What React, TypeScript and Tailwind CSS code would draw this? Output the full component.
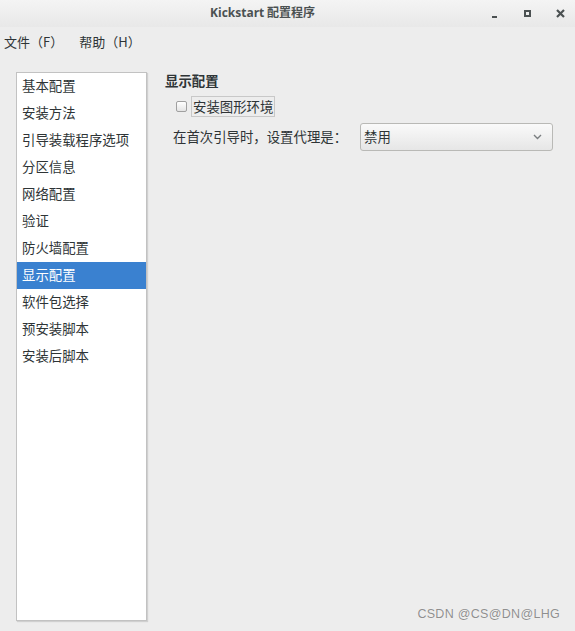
import React from "react";

const items = [
  "基本配置",
  "安装方法",
  "引导装载程序选项",
  "分区信息",
  "网络配置",
  "验证",
  "防火墙配置",
  "显示配置",
  "软件包选择",
  "预安装脚本",
  "安装后脚本",
];

const font = { fontFamily: '"Noto Sans CJK SC", "Noto Sans", sans-serif' };

export default function App() {
  return (
    <div
      className="w-[575px] h-[631px] bg-[#ededed] text-[#2e3436] flex flex-col overflow-hidden relative"
      style={font}
    >
      {/* Title bar */}
      <div className="h-[27px] flex items-center bg-gradient-to-b from-[#f4f4f4] to-[#e8e8e8] shrink-0">
        <div className="pl-[210px] pb-[2px] text-[12px] font-bold text-[#4b5152] leading-none">
          <span style={{ fontFamily: '"Open Sans", "Noto Sans", sans-serif' }}>Kickstart</span> 配置程序
        </div>
        <div className="ml-auto flex items-center -mr-[2px]">
          <div className="w-[33px] h-[27px] flex items-center justify-center">
            <div className="w-[5px] h-[2px] bg-[#4b5152] mt-[6px]" />
          </div>
          <div className="w-[33px] h-[27px] flex items-center justify-center">
            <div className="w-[7px] h-[7px] border-2 border-[#4b5152]" />
          </div>
          <div className="w-[33px] h-[27px] flex items-center justify-center">
            <svg width="9" height="9" viewBox="0 0 9 9">
              <path d="M1 1 L8 8 M8 1 L1 8" stroke="#4b5152" strokeWidth="2.2" />
            </svg>
          </div>
        </div>
      </div>

      {/* Menu bar */}
      <div className="h-[29px] flex items-center text-[13px] text-[#2e3436] shrink-0 pl-[4px] gap-[16px]">
        <span>文件（F）</span>
        <span>帮助（H）</span>
      </div>

      {/* Main */}
      <div className="flex flex-1 pt-[16px] pl-[16px] pb-[10px]">
        <div className="w-[131px] h-[549px] bg-white border border-[#c2c2c2] shadow-[1px_1px_1px_rgba(0,0,0,0.12)] flex flex-col shrink-0">
          {items.map((it) => {
            const sel = it === "显示配置";
            return (
              <div
                key={it}
                className={
                  "h-[27px] flex items-center pl-[5px] pb-[3px] text-[13.4px] whitespace-nowrap " +
                  (sel ? "bg-[#3a81d0] text-white" : "text-[#2e3436]")
                }
              >
                {it}
              </div>
            );
          })}
        </div>

        <div className="flex flex-col pl-[18px] pt-0">
          <div className="h-[18px] flex items-center pb-[1px] text-[13.4px] font-bold text-[#2e3436]">显示配置</div>
          <div className="flex items-center mt-[6px] pl-[11px] gap-[4px]">
            <div className="w-[11px] h-[11px] rounded-[2px] border border-[#a0a0a0] bg-gradient-to-b from-white to-[#e4e4e4]" />
            <div className="h-[21px] px-[1px] pb-[1px] border border-[#c8c8c8] flex items-center text-[13.4px] text-[#2e3436]">
              安装图形环境
            </div>
          </div>
          <div className="flex items-center mt-[6px] pl-[8px]">
            <span className="text-[13.4px] text-[#2e3436] w-[187px] whitespace-nowrap pb-[2px]">在首次引导时，设置代理是：</span>
            <div className="w-[193px] h-[28px] rounded-[3px] border border-[#b9b9b6] bg-gradient-to-b from-[#fafafa] to-[#e6e6e6] flex items-center pl-[3px] pr-[10px] text-[13.4px] text-[#2e3436]">
              <span className="pb-[2px]">禁用</span>
              <svg className="ml-auto" width="9" height="6" viewBox="0 0 9 6">
                <path d="M1 1 L4.5 4.5 L8 1" stroke="#7a7e80" strokeWidth="1.4" fill="none" />
              </svg>
            </div>
          </div>
        </div>
      </div>

      <div
        className="absolute right-[15px] bottom-[7px] text-[12.5px] text-[#8f8f8f] tracking-[0.3px]"
        style={{ fontFamily: '"Liberation Sans", Arial, sans-serif', textShadow: "0 0 1px #fff" }}
      >
        CSDN @CS@DN@LHG
      </div>
    </div>
  );
}
